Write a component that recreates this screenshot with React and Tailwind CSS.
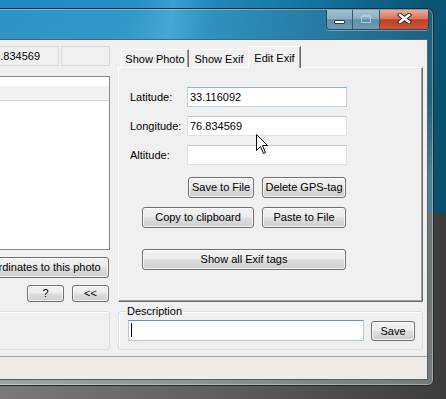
import React from "react";

const btnCls =
  "flex items-center justify-center rounded-[3px] border border-[#707070] bg-[linear-gradient(180deg,#f2f2f2_0%,#ebebeb_48%,#dddddd_52%,#cfcfcf_100%)] shadow-[inset_0_0_0_1px_rgba(255,255,255,0.75)] text-black leading-none whitespace-nowrap";

function Btn({ className = "", children }) {
  return <div className={btnCls + " " + className}>{children}</div>;
}

function Field({ children, focused }) {
  return (
    <div
      className={
        focused
          ? "flex h-[20px] w-[160px] items-center border border-[#b3d2ec] border-t-[#86b2da] bg-white pl-[2px]"
          : "flex h-[20px] w-[160px] items-center border border-[#dfe3e9] border-t-[#c3c7ce] bg-white pl-[2px]"
      }
    >
      {children}
    </div>
  );
}

function Row({ label, value, focused }) {
  return (
    <div className="flex h-[20px] items-center">
      <div className="w-[57px]">{label}</div>
      <Field focused={focused}>{value}</Field>
    </div>
  );
}

export default function App() {
  return (
    <div className="relative h-[399px] w-[446px] overflow-hidden font-['Liberation_Sans',Arial,sans-serif] text-[11px] text-black">
      {/* desktop */}
      <div className="absolute inset-0 flex flex-col">
        <div className="h-[213px] bg-[linear-gradient(100deg,#1c8bc2_0%,#2191c6_28%,#35a0d2_36%,#1f89bb_44%,#146f9b_68%,#0b5676_88%,#0a4e6c_100%)]" />
        <div className="flex-1 bg-[linear-gradient(90deg,#7a7a7a_0%,#616161_45%,#3c3c3c_100%)]" />
      </div>

      {/* window */}
      <div className="absolute left-[-70px] top-[8px] flex h-[378px] w-[504px] flex-col rounded-b-[6px] rounded-t-[7px] border border-[#1c2b33] bg-[linear-gradient(180deg,rgba(255,255,255,0.07)_0%,rgba(255,255,255,0.1)_25%,rgba(255,255,255,0.28)_45%,rgba(255,255,255,0.3)_100%)] px-[5px] pb-[5px] pt-[30px] shadow-[inset_0_0_0_1px_rgba(255,255,255,0.35)]">
        {/* caption buttons */}
        <div className="absolute right-[4px] top-[1px] flex h-[20px] overflow-hidden rounded-b-[4px] border border-t-0 border-[#2c4656] shadow-[0_1px_0_rgba(255,255,255,0.35)]">
          <div className="flex w-[26px] items-start justify-center border-r border-[#3a5767] bg-[linear-gradient(180deg,#a4c2d2_0%,#8aaec2_45%,#5f8da6_52%,#6e9db5_100%)] pt-[10px]">
            <div className="h-[4px] w-[11px] rounded-[1px] border border-[#2a3f4c] bg-white" />
          </div>
          <div className="flex w-[27px] items-start justify-center border-r border-[#3a5767] bg-[linear-gradient(180deg,#a4c2d2_0%,#8aaec2_45%,#5f8da6_52%,#6e9db5_100%)] pt-[5px]">
            <div className="h-[8px] w-[10px] border border-[#c2d4de] border-t-2 opacity-80" />
          </div>
          <div className="flex w-[48px] items-start justify-center bg-[linear-gradient(180deg,#e6ad9c_0%,#d6765f_45%,#c23e23_52%,#cf5538_100%)] pt-[3px]">
            <svg width="15" height="11" viewBox="0 0 15 11">
              <path d="M3 2 L12 9 M12 2 L3 9" stroke="#4a1d14" strokeWidth="4.4" strokeLinecap="square" />
              <path d="M3 2 L12 9 M12 2 L3 9" stroke="#ffffff" strokeWidth="2.4" strokeLinecap="square" />
            </svg>
          </div>
        </div>

        {/* client */}
        <div className="flex flex-1 flex-col border border-[#4a6472] bg-[#f0f0f0]">
          <div className="flex h-[316px] gap-[8px] pl-[5px] pt-[6px]">
            {/* left column */}
            <div className="flex w-[168px] flex-col">
              <div className="flex h-[20px] justify-end gap-[2px]">
                <div className="flex w-[74px] items-center border border-[#d5d9de] px-[2px]">76.834569</div>
                <div className="w-[49px] border border-[#d5d9de]" />
              </div>
              <div className="mt-[10px] h-[174px] border border-[#828790] bg-white">
                <div className="h-[24px] border-b border-[#d5d5d5] bg-[linear-gradient(180deg,#ffffff_0%,#ffffff_40%,#f1f2f4_40%,#f1f2f4_100%)]" />
              </div>
              <div className="mt-[7px] flex justify-end pr-[1px]">
                <Btn className="h-[21px] w-[156px]">Set coordinates to this photo</Btn>
              </div>
              <div className="mt-[7px] flex justify-end gap-[8px] pr-[1px]">
                <Btn className="h-[17px] w-[37px]">?</Btn>
                <Btn className="h-[17px] w-[37px]">&lt;&lt;</Btn>
              </div>
              <div className="mt-[9px] h-[39px] rounded-[3px] border border-[#d5dfe5] shadow-[inset_1px_1px_0_#ffffff]" />
            </div>

            {/* right column */}
            <div className="flex w-[305px] flex-col">
              <div className="flex h-[21px] items-end pl-[3px]">
                <div className="flex h-[18px] w-[68px] items-center justify-center rounded-tl-[2px] border-l border-r border-t border-l-white border-r-[#696969] border-t-white pt-px shadow-[inset_-1px_0_0_#a0a0a0]">
                  Show Photo
                </div>
                <div className="flex h-[18px] w-[61px] items-center justify-center border-r border-t border-r-[#696969] border-t-white pt-px shadow-[inset_-1px_0_0_#a0a0a0]">
                  Show Exif
                </div>
                <div className="relative z-10 -mb-px ml-[-2px] flex h-[22px] w-[53px] items-start justify-center rounded-tl-[2px] border-l border-r border-t border-l-white border-r-[#696969] border-t-white bg-[#f0f0f0] pt-[3px] shadow-[inset_-1px_0_0_#a0a0a0]">
                  Edit Exif
                </div>
              </div>
              <div className="h-[235px] border border-b-[#696969] border-l-white border-r-[#696969] border-t-white shadow-[inset_-1px_-1px_0_#a0a0a0]">
                <div className="ml-[11px] mt-[19px] flex w-[217px] flex-col">
                  <div className="flex flex-col gap-[9px]">
                    <Row label="Latitude:" value="33.116092" focused />
                    <Row label="Longitude:" value="76.834569" />
                    <Row label="Altitude:" value="" />
                  </div>
                  <div className="mt-[12px] flex w-[216px] justify-end gap-[8px]">
                    <Btn className="h-[21px] w-[66px]">Save to File</Btn>
                    <Btn className="h-[21px] w-[84px]">Delete GPS-tag</Btn>
                  </div>
                  <div className="mt-[9px] flex w-[216px] justify-end gap-[8px]">
                    <Btn className="h-[21px] w-[112px]">Copy to clipboard</Btn>
                    <Btn className="h-[21px] w-[84px]">Paste to File</Btn>
                  </div>
                  <div className="mt-[21px] flex w-[216px] justify-end">
                    <Btn className="h-[21px] w-[204px]">Show all Exif tags</Btn>
                  </div>
                </div>
              </div>
              <div className="relative mt-[9px] flex h-[39px] items-start rounded-[3px] border border-[#d5dfe5] pl-[9px] pt-[8px] shadow-[inset_1px_1px_0_#ffffff]">
                <span className="absolute left-[7px] top-[-7px] bg-[#f0f0f0] px-px leading-[13px]">Description</span>
                <div className="relative h-[21px] w-[236px] border border-[#a9cbe6] border-t-[#5d96c8] bg-white">
                  <div className="absolute left-[2px] top-[2px] h-[14px] w-px bg-black" />
                </div>
                <Btn className="ml-[7px] mt-px h-[20px] w-[44px]">Save</Btn>
              </div>
            </div>
          </div>
          <div className="flex-1 border-t border-[#a0a0a0] bg-[#eeebe9]" />
        </div>
      </div>

      {/* mouse cursor */}
      <svg className="absolute left-[256px] top-[134px]" width="13" height="21" viewBox="0 0 13 21">
        <path
          d="M0.5 0.5 L0.5 16.5 L4.5 12.5 L7.5 19.5 L9.5 18.5 L6.5 11.5 L11.5 11.5 Z"
          fill="#ffffff"
          stroke="#000000"
          strokeWidth="1"
        />
      </svg>
    </div>
  );
}
